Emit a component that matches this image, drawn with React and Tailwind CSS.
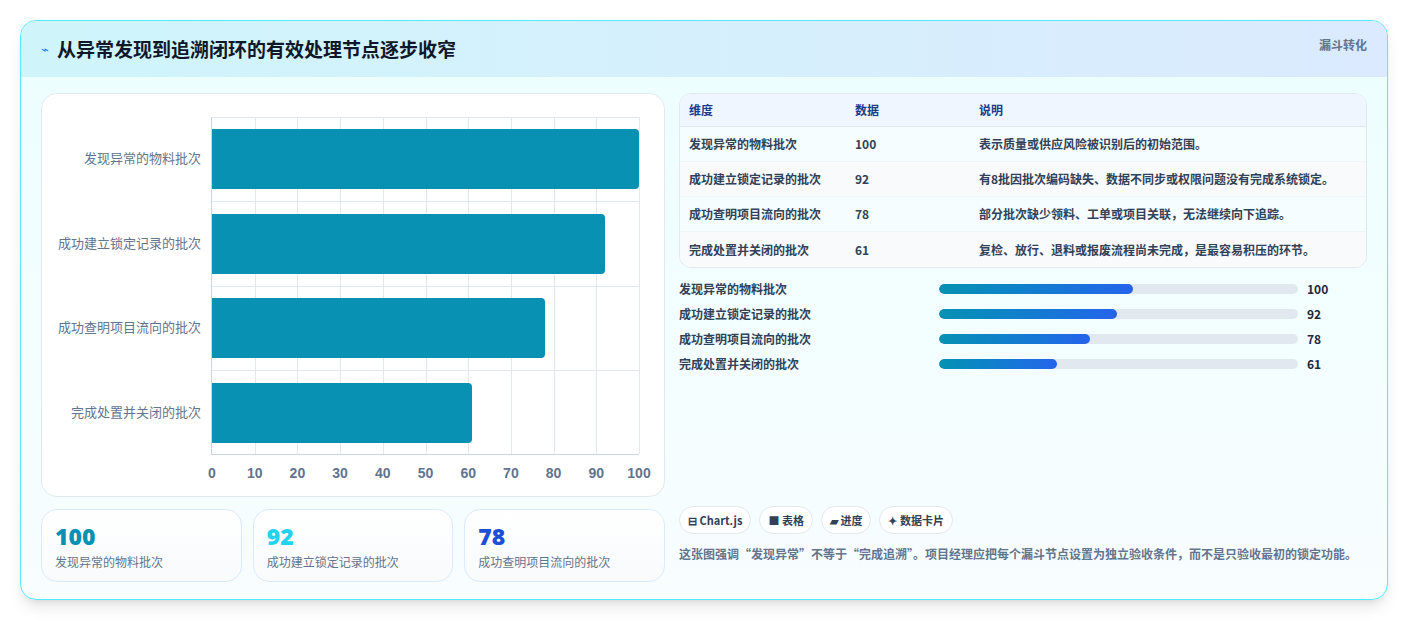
import React from "react";

const rows = [
  { k: "发现异常的物料批次", v: 100, d: "表示质量或供应风险被识别后的初始范围。" },
  { k: "成功建立锁定记录的批次", v: 92, d: "有8批因批次编码缺失、数据不同步或权限问题没有完成系统锁定。" },
  { k: "成功查明项目流向的批次", v: 78, d: "部分批次缺少领料、工单或项目关联，无法继续向下追踪。" },
  { k: "完成处置并关闭的批次", v: 61, d: "复检、放行、退料或报废流程尚未完成，是最容易积压的环节。" },
];
const font = { fontFamily: '"Noto Sans CJK SC", "Noto Sans", sans-serif' };
const ticks = [0, 10, 20, 30, 40, 50, 60, 70, 80, 90, 100];

function Chart() {
  return (
    <div className="h-[404px] rounded-2xl border border-slate-200 bg-white relative">
      <div className="absolute left-[169px] top-[23px] w-[428px] h-[338px] border-l border-b border-slate-300">
        {ticks.slice(1).map((t) => (
          <div key={t} className="absolute top-0 bottom-0 border-l border-slate-200" style={{ left: `${t}%` }} />
        ))}
        {[1, 2, 3].map((i) => (
          <div key={i} className="absolute left-0 right-0 border-t border-slate-200" style={{ top: `${i * 25}%` }} />
        ))}
        <div className="absolute left-0 right-0 top-0 border-t border-slate-200" />
        {rows.map((r, i) => (
          <div key={r.k} className="absolute left-0 h-[60px] bg-[#0891b2] rounded-r-sm" style={{ top: 12 + i * 84.5, width: `${r.v}%` }} />
        ))}
        {rows.map((r, i) => (
          <div key={r.k + "l"} className="absolute right-[438px] whitespace-nowrap text-[13px] text-slate-500" style={{ top: 31 + i * 84.5 }}>{r.k}</div>
        ))}
        {ticks.map((t) => (
          <div key={t} className="absolute top-[346px] -translate-x-1/2 text-[14px] font-semibold text-slate-500" style={{ left: `${t}%`, fontFamily: '"Liberation Sans", sans-serif' }}>{t}</div>
        ))}
      </div>
    </div>
  );
}

export default function App() {
  const colors = ["text-[#0891b2]", "text-[#22d3ee]", "text-[#1d4ed8]"];
  return (
    <div className="w-[1408px] h-[620px] bg-white p-5" style={font}>
      <div className="h-[580px] rounded-2xl border border-cyan-300 bg-gradient-to-b from-[#ecfeff] to-[#f8fdff] shadow-lg overflow-hidden">
        <div className="h-[56px] bg-gradient-to-r from-[#cff5fb] to-[#dbeafe] flex items-center justify-between px-5">
          <div className="flex items-center gap-2">
            <span className="text-blue-500 text-[13px]">⌁</span>
            <span className="text-[19px] font-bold text-slate-900">从异常发现到追溯闭环的有效处理节点逐步收窄</span>
          </div>
          <span className="text-[12px] font-bold text-slate-500 self-start mt-[15px]">漏斗转化</span>
        </div>
        <div className="flex gap-[14px] px-5 pt-4">
          <div className="w-[624px] flex flex-col gap-[12px]">
            <Chart />
            <div className="grid grid-cols-3 gap-[11px]">
              {rows.slice(0, 3).map((r, i) => (
                <div key={r.k} className="h-[73px] rounded-2xl border border-blue-100 bg-gradient-to-b from-white to-slate-50 px-[13px] pt-[12px]">
                  <div className={`text-[23px] font-extrabold leading-7 ${colors[i]}`} style={{ fontFamily: '"Open Sans", sans-serif' }}>{r.v}</div>
                  <div className="text-[12px] text-slate-500 mt-[3px]">{r.k}</div>
                </div>
              ))}
            </div>
          </div>
          <div className="flex-1 flex flex-col">
            <div className="rounded-xl border border-slate-200 overflow-hidden bg-white text-[12px]">
              <div className="flex h-[33px] items-center bg-[#eff6ff] text-[#1e3a8a] font-semibold border-b border-slate-200 px-[9px]">
                <div className="w-[166px]">维度</div><div className="w-[124px]">数据</div><div>说明</div>
              </div>
              {rows.map((r, i) => (
                <div key={r.k} className={`flex h-[35px] items-center px-[9px] font-semibold text-slate-700 ${i < 3 ? "border-b border-slate-100" : ""} ${i % 2 ? "bg-slate-50" : "bg-[#f5fdff]"}`}>
                  <div className="w-[166px]">{r.k}</div><div className="w-[124px]">{r.v}</div><div>{r.d}</div>
                </div>
              ))}
            </div>
            <div className="mt-[12px] flex flex-col gap-[8px]">
              {rows.map((r) => (
                <div key={r.k} className="flex items-center h-[17px] text-[12px] font-semibold text-slate-700">
                  <div className="w-[260px]">{r.k}</div>
                  <div className="w-[359px] h-[10px] rounded-full bg-slate-200 overflow-hidden">
                    <div className="h-full rounded-full bg-gradient-to-r from-[#0891b2] to-[#2563eb]" style={{ width: `${r.v * 0.54}%` }} />
                  </div>
                  <div className="ml-[9px] font-bold text-slate-800">{r.v}</div>
                </div>
              ))}
            </div>
            <div className="mt-auto flex gap-[8px]">
              {["⊟ Chart.js", "■ 表格", "▰ 进度", "✦ 数据卡片"].map((c) => (
                <span key={c} className="h-[28px] px-[8px] rounded-full border border-slate-200 bg-white flex items-center text-[11px] font-semibold text-slate-700">{c}</span>
              ))}
            </div>
            <p className="mt-[10px] mb-[18px] text-[12px] leading-[20px] font-semibold text-slate-500">这张图强调“发现异常”不等于“完成追溯”。项目经理应把每个漏斗节点设置为独立验收条件，而不是只验收最初的锁定功能。</p>
          </div>
        </div>
      </div>
    </div>
  );
}
